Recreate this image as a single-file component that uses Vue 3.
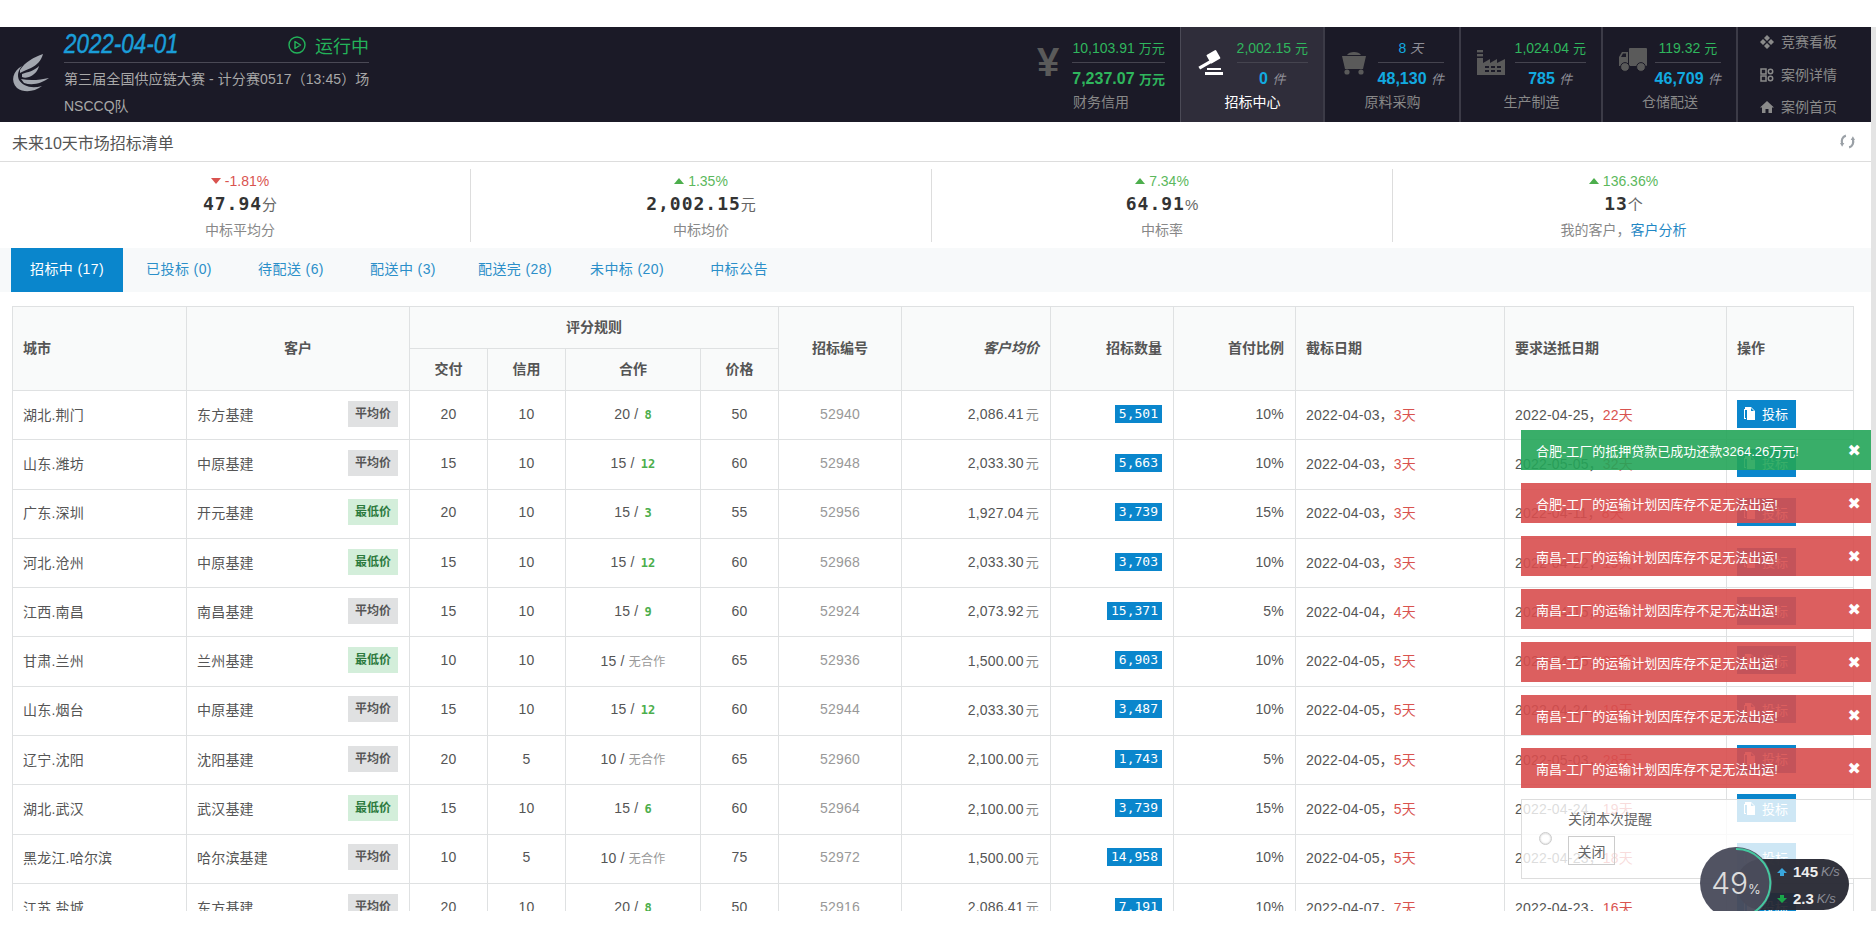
<script setup>
const rows = [
  ['湖北.荆门','东方基建','平均价',20,10,'20','8',50,52940,'2,086.41','5,501','10%','2022-04-03','3天','2022-04-25','22天'],
  ['山东.潍坊','中原基建','平均价',15,10,'15','12',60,52948,'2,033.30','5,663','10%','2022-04-03','3天','2022-05-05','32天'],
  ['广东.深圳','开元基建','最低价',20,10,'15','3',55,52956,'1,927.04','3,739','15%','2022-04-03','3天','2022-04-11','8天'],
  ['河北.沧州','中原基建','最低价',15,10,'15','12',60,52968,'2,033.30','3,703','10%','2022-04-03','3天','2022-04-22','19天'],
  ['江西.南昌','南昌基建','平均价',15,10,'15','9',60,52924,'2,073.92','15,371','5%','2022-04-04','4天','2022-04-15','11天'],
  ['甘肃.兰州','兰州基建','最低价',10,10,'15','',65,52936,'1,500.00','6,903','10%','2022-04-05','5天','2022-04-25','20天'],
  ['山东.烟台','中原基建','平均价',15,10,'15','12',60,52944,'2,033.30','3,487','10%','2022-04-05','5天','2022-04-24','19天'],
  ['辽宁.沈阳','沈阳基建','平均价',20,5,'10','',65,52960,'2,100.00','1,743','5%','2022-04-05','5天','2022-05-03','28天'],
  ['湖北.武汉','武汉基建','最低价',15,10,'15','6',60,52964,'2,100.00','3,739','15%','2022-04-05','5天','2022-04-24','19天'],
  ['黑龙江.哈尔滨','哈尔滨基建','平均价',10,5,'10','',75,52972,'1,500.00','14,958','10%','2022-04-05','5天','2022-04-23','18天'],
  ['江苏.盐城','东方基建','平均价',20,10,'20','8',50,52916,'2,086.41','7,191','10%','2022-04-07','7天','2022-04-23','16天'],
]
const tabs = ['招标中 (17)','已投标 (0)','待配送 (6)','配送中 (3)','配送完 (28)','未中标 (20)','中标公告']
const stats = [
  { d:'-1.81%', up:false, v:'47.94', u:'分', l:'中标平均分' },
  { d:'1.35%', up:true, v:'2,002.15', u:'元', l:'中标均价' },
  { d:'7.34%', up:true, v:'64.91', u:'%', l:'中标率' },
  { d:'136.36%', up:true, v:'13', u:'个', l:'我的客户，', link:'客户分析' },
]
const notices = [
  { t:'合肥-工厂的抵押贷款已成功还款3264.26万元!', ok:true },
  { t:'合肥-工厂的运输计划因库存不足无法出运!' },
  { t:'南昌-工厂的运输计划因库存不足无法出运!' },
  { t:'南昌-工厂的运输计划因库存不足无法出运!' },
  { t:'南昌-工厂的运输计划因库存不足无法出运!' },
  { t:'南昌-工厂的运输计划因库存不足无法出运!' },
  { t:'南昌-工厂的运输计划因库存不足无法出运!' },
]
const cols = [174,223,78,78,135,78,123,149,123,122,209,222,127]
</script>

<template>
  <div class="page">
    <div class="main">
      <header class="top">
        <div class="brand">
          <svg class="logo" viewBox="0 0 40 40" width="40" height="40">
            <path fill="#a3a7af" d="M12 13C3 18 0 28 7 35c7 5 17 4 25-2-11 3-19 0-23-6-2-5-1-9 3-14z"/>
            <path fill="#a3a7af" d="M10 17C15 9 24 4 33 1c-2 7-6 11-12 14-4 2-8 3-11 5z"/>
            <path fill="#a3a7af" d="M12 21c6-2 12-3 17-8-1 5-5 9-10 11-3 1-5 1-7 0z"/>
            <path fill="#a3a7af" d="M11 26c9 2 19 1 28-1-7 5-16 8-25 5z"/>
          </svg>
          <div class="brand-text">
            <div class="brand-head">
              <span class="date">2022-04-01</span>
              <span class="run">
                <svg viewBox="0 0 18 18" width="18" height="18"><circle cx="9" cy="9" r="8" fill="none" stroke="#23b35a" stroke-width="1.4"/><path d="M7 5.500v7l5.500-3.500z" fill="none" stroke="#23b35a" stroke-width="1.4" stroke-linejoin="round"/></svg>
                运行中
              </span>
            </div>
            <div class="brand-sub">第三届全国供应链大赛 - 计分赛0517（13:45）场</div>
            <div class="brand-team">NSCCQ队</div>
          </div>
        </div>
        <nav class="nav">
          <div class="cell c-fin">
            <div class="cell-top">
              <span class="yen">¥</span>
              <div class="metrics">
                <div class="m1 green">10,103.91 <small>万元</small></div>
                <div class="m2 green">7,237.07 <small>万元</small></div>
              </div>
            </div>
            <div class="cell-label">财务信用</div>
          </div>
          <div class="cell active">
            <div class="cell-top">
              <svg class="ico" viewBox="0 0 28 28" width="28" height="28"><g fill="#fff"><rect x="1" y="15" width="15" height="3.4" transform="rotate(-30 8 16)"/><rect x="11" y="4" width="11" height="10" rx="1" transform="rotate(-30 16 9)"/><rect x="10" y="20" width="14" height="2" /><rect x="8" y="24" width="18" height="3"/></g></svg>
              <div class="metrics">
                <div class="m1 green">2,002.15 <small>元</small></div>
                <div class="m2 blue">0 <i>件</i></div>
              </div>
            </div>
            <div class="cell-label">招标中心</div>
          </div>
          <div class="cell">
            <div class="cell-top">
              <svg class="ico" viewBox="0 0 26 28" width="26" height="28"><g fill="#5a5a5a"><path d="M6 7c2-4 12-4 14 0z"/><path d="M1 8h24l-3 13H4z"/><circle cx="6" cy="24" r="2.600"/><circle cx="20" cy="24" r="2.600"/></g></svg>
              <div class="metrics">
                <div class="m1 blue">8 <i>天</i></div>
                <div class="m2 blue">48,130 <i>件</i></div>
              </div>
            </div>
            <div class="cell-label">原料采购</div>
          </div>
          <div class="cell">
            <div class="cell-top">
              <svg class="ico" viewBox="0 0 28 28" width="28" height="28"><g fill="#5a5a5a"><rect x="0" y="2" width="6" height="2.400"/><rect x="0" y="6" width="6" height="2.400"/><path d="M0 10h6v5l7-4v4l7-4v4l8-4v16H0z"/></g><g fill="#1b1a27"><rect x="8" y="18" width="4" height="2"/><rect x="14" y="18" width="4" height="2"/><rect x="20" y="18" width="4" height="2"/><rect x="8" y="22" width="4" height="2"/><rect x="14" y="22" width="4" height="2"/><rect x="20" y="22" width="4" height="2"/></g></svg>
              <div class="metrics">
                <div class="m1 green">1,024.04 <small>元</small></div>
                <div class="m2 blue">785 <i>件</i></div>
              </div>
            </div>
            <div class="cell-label">生产制造</div>
          </div>
          <div class="cell">
            <div class="cell-top">
              <svg class="ico" viewBox="0 0 28 24" width="28" height="24"><g fill="#5a5a5a"><rect x="10" y="0" width="18" height="18" rx="1"/><path d="M0 9l3-5h6v14H0z"/><circle cx="6" cy="19" r="4.400" stroke="#1b1a27" stroke-width="1"/><circle cx="22" cy="19" r="4.400" stroke="#1b1a27" stroke-width="1"/></g><path d="M2 9l2-3.400h3V9z" fill="#1b1a27"/></svg>
              <div class="metrics">
                <div class="m1 green">119.32 <small>元</small></div>
                <div class="m2 blue">46,709 <i>件</i></div>
              </div>
            </div>
            <div class="cell-label">仓储配送</div>
          </div>
          <div class="links">
            <a>
              <svg viewBox="0 0 14 14" width="14" height="14"><g fill="#8a8a8a"><path d="M7 0l3 3-3 3-3-3z"/><path d="M7 8l3 3-3 3-3-3z"/><path d="M3 4l3 3-3 3-3-3z"/><path d="M11 4l3 3-3 3-3-3z"/></g></svg>
              竞赛看板
            </a>
            <a>
              <svg viewBox="0 0 14 14" width="14" height="14"><g fill="none" stroke="#8a8a8a" stroke-width="1.5"><rect x="1" y="1" width="5" height="5"/><rect x="1" y="8" width="5" height="5"/><circle cx="10.500" cy="3.500" r="2.200"/><circle cx="10.500" cy="10.500" r="2.200"/></g></svg>
              案例详情
            </a>
            <a>
              <svg viewBox="0 0 14 14" width="14" height="14"><path fill="#8a8a8a" d="M7 1l7 6.500h-2V13H8.500V9h-3v4H2V7.500H0z"/></svg>
              案例首页
            </a>
          </div>
        </nav>
      </header>

      <div class="title">
        <span>未来10天市场招标清单</span>
        <svg viewBox="0 0 14 14" width="15" height="15"><g fill="none" stroke="#9aa0a6" stroke-width="2"><path d="M5.500 1.500C2 2.500 1 6 2 9.500"/><path d="M8.500 12.500C12 11.500 13 8 12 4.500"/></g><path d="M0 8.500l4 0-2 3.500z" fill="#9aa0a6"/><path d="M14 5.500l-4 0 2-3.500z" fill="#9aa0a6"/></svg>
      </div>

      <section class="stats">
        <div v-for="s in stats" :key="s.l" class="stat">
          <div class="delta" :class="s.up ? 'up' : 'down'"><b class="tri"></b>{{ s.d }}</div>
          <div class="val">{{ s.v }}<small>{{ s.u }}</small></div>
          <div class="lbl">{{ s.l }}<a v-if="s.link">{{ s.link }}</a></div>
        </div>
      </section>

      <div class="tabs">
        <a v-for="(t, i) in tabs" :key="t" :class="{ on: i === 0 }">{{ t }}</a>
      </div>

      <table class="grid">
        <colgroup><col v-for="(c, i) in cols" :key="i" :style="{ width: c + 'px' }"></colgroup>
        <thead>
          <tr>
            <th rowspan="2" class="l">城市</th>
            <th rowspan="2">客户</th>
            <th colspan="4">评分规则</th>
            <th rowspan="2">招标编号</th>
            <th rowspan="2" class="r"><em>客户均价</em></th>
            <th rowspan="2" class="r">招标数量</th>
            <th rowspan="2" class="r">首付比例</th>
            <th rowspan="2" class="l">截标日期</th>
            <th rowspan="2" class="l">要求送抵日期</th>
            <th rowspan="2" class="l">操作</th>
          </tr>
          <tr><th>交付</th><th>信用</th><th>合作</th><th>价格</th></tr>
        </thead>
        <tbody>
          <tr v-for="r in rows" :key="r[8]">
            <td class="l">{{ r[0] }}</td>
            <td class="l">
              <div class="cust"><span>{{ r[1] }}</span><b class="tag" :class="{ low: r[2] === '最低价' }">{{ r[2] }}</b></div>
            </td>
            <td>{{ r[3] }}</td>
            <td>{{ r[4] }}</td>
            <td>{{ r[5] }} / <b v-if="r[6]" class="co">{{ r[6] }}</b><span v-else class="none">无合作</span></td>
            <td>{{ r[7] }}</td>
            <td class="no">{{ r[8] }}</td>
            <td class="r">{{ r[9] }}<span class="unit">元</span></td>
            <td class="r"><span class="qty">{{ r[10] }}</span></td>
            <td class="r">{{ r[11] }}</td>
            <td class="l">{{ r[12] }}，<span class="days">{{ r[13] }}</span></td>
            <td class="l">{{ r[14] }}，<span class="days">{{ r[15] }}</span></td>
            <td class="l act">
              <button class="bid">
                <svg viewBox="0 0 12 13" width="12" height="13"><path fill="#fff" d="M1 0h6l4 4v9H3V3H1z M0 2h1v9h1v1H0z"/><path fill="#0a86cc" d="M7 1v3h3z"/></svg>
                投标
              </button>
            </td>
          </tr>
        </tbody>
      </table>

      <div class="notices">
        <div v-for="(n, i) in notices" :key="i" class="notice" :class="{ ok: n.ok }">
          <span>{{ n.t }}</span><b>✖</b>
        </div>
        <div class="close-panel">
          <span class="radio"></span>
          <div class="close-body">
            <div>关闭本次提醒</div>
            <button>关闭</button>
          </div>
        </div>
      </div>

      <div class="speed">
        <div class="pill">
          <div class="sp"><svg viewBox="0 0 10 10" width="10" height="10"><path fill="#3aa7dd" d="M5 1l5 5H7v3H3V6H0z"/></svg><b>145</b><i>K/s</i></div>
          <div class="sp"><svg viewBox="0 0 10 10" width="10" height="10"><path fill="#1aa64a" d="M5 9L0 4h3V1h4v3h3z"/></svg><b>2.3</b><i>K/s</i></div>
        </div>
        <div class="ball">
          <svg viewBox="0 0 72 72" width="72" height="72"><path d="M36 2A34 34 0 0 1 40 69.800" fill="none" stroke="#45c9a0" stroke-width="2"/></svg>
          <span>49<small>%</small></span>
        </div>
      </div>
    </div>
    <div class="bar"></div>
  </div>
</template>

<style>
html, body { margin: 0; background: #fff; }
</style>

<style scoped>
.page {
  display: flex; align-items: flex-start; height: 938px; padding-top: 27px; box-sizing: border-box;
  overflow: hidden; background: #fff; color: #555;
  font-family: "Liberation Sans", "Noto Sans CJK SC", sans-serif; font-size: 14px;
}
.main { position: relative; width: 1871px; height: 884px; overflow: hidden; flex: none; }
.bar { width: 5px; height: 884px; background: #e4e4e4; flex: none; }

.top { display: flex; justify-content: space-between; height: 95px; background: #1b1a27; }
.brand { display: flex; align-items: center; padding-left: 10px; gap: 14px; }
.logo { flex: none; margin-top: -3px; }
.brand-text { width: 305px; align-self: stretch; }
.brand-head { display: flex; justify-content: space-between; align-items: center; height: 35px; border-bottom: 1px solid #4a4955; }
.date { display: inline-block; width: 113px; transform: scaleX(.8); transform-origin: left center; font-size: 28px; font-style: italic; color: #1a9ed9; -webkit-text-stroke: .5px #1a9ed9; white-space: nowrap; margin-top: -2px; }
.run { display: flex; align-items: center; gap: 9px; font-size: 18px; color: #23b35a; }
.brand-sub { font-size: 14px; letter-spacing: .1px; color: #a8a8a8; margin-top: 6px; line-height: 20px; white-space: nowrap; }
.brand-team { font-size: 14px; color: #a8a8a8; margin-top: 7px; line-height: 20px; }

.nav { display: flex; }
.cell { width: 136px; box-sizing: border-box; border-left: 2px solid #3c3b47; padding: 0 15px 0 16px; display: flex; flex-direction: column; }
.cell:nth-child(4) { width: 142px; }
.cell:nth-child(5) { width: 135px; }
.cell.active { width: 143px; background: #2f2d3a; border-left: 1px solid #4b4a56; }
.cell.c-fin { width: 164px; border-left: 0; padding-left: 21px; }
.cell-top { display: flex; justify-content: space-between; align-items: flex-start; height: 63px; }
.ico { flex: none; margin-top: 21px; }
.yen { font-size: 40px; font-weight: bold; color: #5a5a5a; line-height: 1; margin-top: 15px; }
.metrics { text-align: center; white-space: nowrap; margin-top: 11px; }
.m1 { font-size: 14px; line-height: 20px; padding-bottom: 3px; border-bottom: 1px solid #45444f; }
.m2 { font-size: 16px; font-weight: bold; line-height: 24px; padding-top: 4px; }
.metrics small { font-size: 13px; font-weight: normal; }
.metrics .m2 small { font-weight: bold; }
.metrics i { font-size: 13px; font-weight: normal; color: #8f8f98; }
.green { color: #2fb65d; }
.blue { color: #12aae0; }
.cell-label { text-align: center; font-size: 14px; color: #888; line-height: 20px; margin-top: 2px; }
.active .cell-label { color: #fff; }
.links { width: 135px; box-sizing: border-box; border-left: 2px solid #3c3b47; padding-left: 22px; display: flex; flex-direction: column; justify-content: space-between; padding-top: 5px; padding-bottom: 5px; }
.links a { display: flex; align-items: center; gap: 7px; color: #8a8a8a; font-size: 14px; line-height: 20px; }

.title { display: flex; justify-content: space-between; align-items: center; height: 40px; padding: 0 16px 0 12px; border-bottom: 1px solid #ddd; box-sizing: border-box; font-size: 16px; color: #555; }
.stats { display: grid; grid-template-columns: repeat(4, 461px); padding: 7px 0 6px 10px; height: 86px; box-sizing: border-box; }
.stat { text-align: center; border-right: 1px solid #ddd; padding-top: 3px; }
.stat:last-child { border-right: 0; }
.delta { font-size: 14px; line-height: 18px; }
.delta.down { color: #d9534f; }
.delta.up { color: #5cb85c; }
.tri { display: inline-block; width: 0; height: 0; border-left: 5px solid transparent; border-right: 5px solid transparent; margin-right: 4px; vertical-align: 2px; }
.down .tri { border-top: 6px solid #d9534f; }
.up .tri { border-bottom: 6px solid #4cae4c; }
.val { font-family: "DejaVu Sans Mono", monospace; font-size: 18px; font-weight: bold; letter-spacing: 1px; color: #333; line-height: 28px; }
.val small { font-family: "Liberation Sans", "Noto Sans CJK SC", sans-serif; font-size: 15px; font-weight: normal; color: #666; letter-spacing: 0; }
.lbl { font-size: 14px; color: #888; line-height: 20px; margin-top: 1px; }
.lbl a { color: #1f87c4; }

.tabs { display: flex; height: 44px; background: #f7f9fa; padding-left: 11px; margin-bottom: 14px; }
.tabs a { width: 112px; text-align: center; line-height: 43px; color: #2b8fc9; font-size: 14px; letter-spacing: .4px; }
.tabs a.on { background: #0a86cc; color: #fff; }

.grid { table-layout: fixed; border-collapse: collapse; width: 1841px; margin-left: 12px; font-size: 14px; color: #555; }
.grid th, .grid td { border: 1px solid #dfe1e2; padding: 0 10px; text-align: center; white-space: nowrap; }
.grid th { background: #f9fafa; height: 42px; padding-bottom: 3px; box-sizing: border-box; font-weight: bold; color: #555; font-size: 14px; }
.grid td { height: 49.300px; padding-bottom: 3px; box-sizing: border-box; letter-spacing: .2px; }
.grid .l { text-align: left; }
.grid .r { text-align: right; }
.grid th.r, .grid td.r { padding-right: 11px; }
.cust { display: flex; justify-content: space-between; align-items: center; }
.tag { width: 50px; height: 26px; line-height: 26px; text-align: center; background: #e0e1e2; color: #555; font-size: 12px; margin-right: 1px; letter-spacing: 0; }
.tag.low { background: #d3eeda; color: #2c7a3e; }
.co { color: #4cae4c; font-family: "DejaVu Sans Mono", monospace; font-size: 12px; margin-left: 2px; }
.none { color: #999; font-size: 12px; }
.no { color: #999; }
.unit { color: #888; font-size: 13px; margin-left: 2px; }
.qty { display: inline-block; background: #0a86cc; color: #fff; font-family: "DejaVu Sans Mono", monospace; font-size: 13px; line-height: 18px; padding: 0 4px; letter-spacing: 0; }
.days { color: #d9534f; }
.bid { display: flex; align-items: center; gap: 6px; width: 59px; height: 28px; padding: 0 0 0 7px; box-sizing: border-box; border: 0; background: #0a86cc; color: #fff; font: 13px "Liberation Sans", "Noto Sans CJK SC", sans-serif; }

.notices { position: absolute; top: 403px; right: 0; width: 350px; display: flex; flex-direction: column; gap: 13px; }
.notice { display: flex; justify-content: space-between; align-items: center; height: 40px; padding: 0 10px 0 15px; box-sizing: border-box; background: rgba(216,78,78,.9); color: #fff; font-size: 13px; }
.notice.ok { background: rgba(36,165,89,.9); }
.notice b { font-size: 16px; font-family: "DejaVu Sans", sans-serif; }
.close-panel { display: flex; height: 80px; box-sizing: border-box; margin-top: -2px; background: rgba(255,255,255,.8); border: 1px solid #ddd; border-right: 0; padding: 8px 0 0 17px; gap: 11px; }
.radio { width: 11px; height: 11px; margin-top: 24px; border-radius: 50%; border: 1px solid #ccc; box-shadow: inset 0 0 2px #bbb; }
.close-body { font-size: 14px; color: #666; margin-left: 5px; }
.close-body button { display: block; margin-top: 8px; width: 47px; height: 29px; background: transparent; border: 1px solid #ccc; color: #666; font: 14px "Liberation Sans", "Noto Sans CJK SC", sans-serif; padding: 0; }

.speed { position: absolute; left: 1700px; top: 820px; width: 150px; height: 72px; }
.pill { position: absolute; left: 36px; top: 12px; width: 113px; height: 51px; border-radius: 26px; background: rgba(38,39,50,.95); padding-left: 41px; box-sizing: border-box; display: flex; flex-direction: column; justify-content: space-between; padding-top: 4px; padding-bottom: 2px; }
.sp { display: flex; align-items: center; gap: 6px; color: #eee; font-size: 13px; line-height: 18px; }
.sp b { font-size: 15px; }
.sp i { color: #8a8c96; font-size: 13px; margin-left: -3px; }
.ball { position: absolute; left: 0; top: 0; width: 72px; height: 72px; border-radius: 50%; background: rgba(74,76,92,.96); display: flex; align-items: center; justify-content: center; color: #ddd; font-size: 30px; }
.ball svg { position: absolute; left: 0; top: 0; }
.ball span { font-family: "Inter", sans-serif; font-weight: 300; }
.ball small { font-size: 13px; font-weight: 400; }
</style>
